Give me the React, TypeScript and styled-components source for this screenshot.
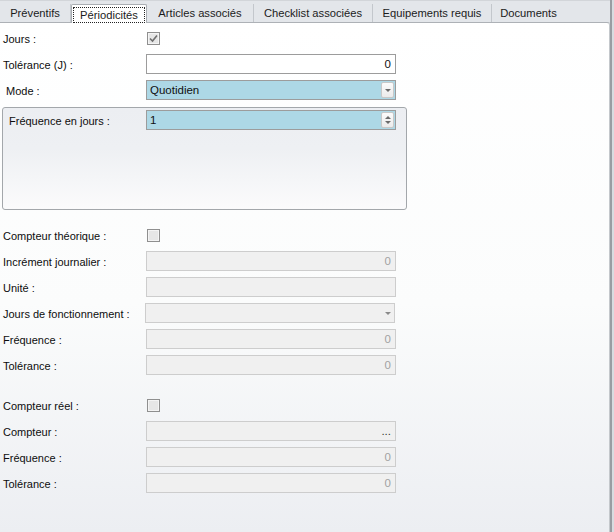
import React from "react"
import styled, { createGlobalStyle } from "styled-components"

const GlobalStyle = createGlobalStyle`
  html, body {
    margin: 0;
    padding: 0;
    height: 100%;
    background: #d9dce0;
  }
  #root {
    height: 100%;
  }
  body {
    font-family: "Liberation Sans", Arial, sans-serif;
    font-size: 11px;
    color: #000;
  }
`

const SWindow = styled.div`
  width: 610px;
  height: 532px;
  display: flex;
  flex-direction: column;
  border-right: 2px solid #9a9da2;
`

const STabStrip = styled.div`
  height: 22px;
  flex-shrink: 0;
  display: flex;
  align-items: flex-end;
  background: #e3e6ea;
  border-top: 1px solid #d2d5d9;
  box-sizing: border-box;
`

const STab = styled.div<{ $width: number; $selected?: boolean; $last?: boolean }>`
  width: ${({ $width }) => $width}px;
  height: ${({ $selected }) => ($selected ? 19 : 18)}px;
  box-sizing: border-box;
  display: flex;
  align-items: center;
  justify-content: center;
  font-size: 11.2px;
  color: #1b1b1b;
  white-space: nowrap;

  ${({ $selected }) =>
    $selected
      ? `
    background: #fff;
    border: 1px solid #a9adb2;
    border-bottom: none;
    border-radius: 2px 2px 0 0;
    margin-bottom: -1px;
    position: relative;
    z-index: 1;
    padding-top: 1px;
  `
      : ``}
  ${({ $selected, $last }) => (!$selected && !$last ? `border-right: 1px solid #c3c7cc;` : ``)}
`

const STabFocus = styled.span`
  border: 1px dotted #222;
  height: 14px;
  padding: 0 6px;
  display: flex;
  align-items: center;
`

const SPanel = styled.div`
  flex: 1;
  border-top: 1px solid #adb1b6;
  border-right: 1px solid #c4c8cc;
  border-top-right-radius: 3px;
  background: linear-gradient(180deg, #ffffff 0%, #fbfcfc 55%, #eceef2 100%);
  padding: 2px 0 0 3px;
  display: flex;
  flex-direction: column;
`

const SRow = styled.div<{ $gapTop?: number }>`
  height: 26px;
  display: grid;
  grid-template-columns: 143px 250px;
  align-items: center;
  margin-top: ${({ $gapTop }) => $gapTop ?? 0}px;
`

const SLabel = styled.span<{ $indent?: number }>`
  padding-left: ${({ $indent }) => $indent ?? 0}px;
  padding-top: 2px;
  white-space: nowrap;
  color: #0d0d0d;
`

const SCheck = styled.span`
  width: 13px;
  height: 13px;
  box-sizing: border-box;
  margin-left: 1px;
  border: 1px solid #8f8f8f;
  box-shadow: inset 0 0 0 1px #f4f4f4;
  background: #e6e6e6;
  display: flex;
  align-items: center;
  justify-content: center;
`

const SField = styled.div<{ $tone: "white" | "blue" | "disabled"; $align?: "left" | "right"; $shift?: number }>`
  width: 250px;
  height: 20px;
  box-sizing: border-box;
  margin-left: ${({ $shift }) => $shift ?? 0}px;
  display: flex;
  align-items: center;
  justify-content: ${({ $align }) => ($align === "right" ? "flex-end" : "flex-start")};
  padding: 0 ${({ $align }) => ($align === "right" ? 4 : 3)}px 0 3px;
  border: 1px solid ${({ $tone }) => ($tone === "disabled" ? "#cdcdcd" : "#9c9c9c")};
  background: ${({ $tone }) =>
    $tone === "blue" ? "#add8e6" : $tone === "disabled" ? "#f0f0f0" : "#ffffff"};
  color: ${({ $tone }) => ($tone === "disabled" ? "#a2a2a2" : "#101010")};
  font-size: 11.5px;
`

const SFieldText = styled.span`
  flex: 1;
`

const SDropButton = styled.span`
  width: 13px;
  height: 16px;
  box-sizing: border-box;
  margin-right: -2px;
  border: 1px solid #c8c8c8;
  border-radius: 2px;
  background: linear-gradient(180deg, #fbfbfb, #ebebeb);
  display: flex;
  align-items: center;
  justify-content: center;
`

const SSpinButtons = styled.span`
  width: 13px;
  height: 16px;
  box-sizing: border-box;
  margin-right: -2px;
  border: 1px solid #c8c8c8;
  border-radius: 2px;
  background: linear-gradient(180deg, #fbfbfb, #ebebeb);
  display: flex;
  flex-direction: column;
  align-items: center;
  justify-content: space-around;
  padding: 2px 0;
`

const SArrow = styled.span<{ $up?: boolean; $color?: string }>`
  width: 0;
  height: 0;
  border-left: 3px solid transparent;
  border-right: 3px solid transparent;
  ${({ $up, $color }) =>
    $up
      ? `border-bottom: 3px solid ${$color ?? "#6a6a6a"};`
      : `border-top: 3px solid ${$color ?? "#6a6a6a"};`}
`

const SGroup = styled.div`
  width: 405px;
  height: 103px;
  box-sizing: border-box;
  margin: 4px 0 12px -1px;
  border: 1px solid #a3a7ab;
  border-radius: 3px;
  background: linear-gradient(180deg, #eceef2 0%, #eef0f3 40%, #fbfbfc 100%);
  padding: 2px 0 0 6px;
`

const SGroupRow = styled.div`
  height: 20px;
  display: grid;
  grid-template-columns: 137px 250px;
  align-items: center;
`

const CheckMark = () => (
  <svg width="9" height="9" viewBox="0 0 9 9">
    <path d="M1 4.5 L3.5 7 L8 1.5" fill="none" stroke="#6f6f6f" strokeWidth="1.6" />
  </svg>
)

const tabs = [
  { label: "Préventifs", width: 71 },
  { label: "Périodicités", width: 76, selected: true },
  { label: "Articles associés", width: 107 },
  { label: "Checklist associées", width: 119 },
  { label: "Equipements requis", width: 119 },
  { label: "Documents", width: 73, last: true },
]

const App = () => {
  return (
    <>
      <GlobalStyle />
      <SWindow>
        <STabStrip>
          {tabs.map((tab) => (
            <STab key={tab.label} $width={tab.width} $selected={tab.selected} $last={tab.last}>
              {tab.selected ? <STabFocus>{tab.label}</STabFocus> : tab.label}
            </STab>
          ))}
        </STabStrip>

        <SPanel>
          <SRow>
            <SLabel>Jours :</SLabel>
            <SCheck>
              <CheckMark />
            </SCheck>
          </SRow>
          <SRow>
            <SLabel>Tolérance (J) :</SLabel>
            <SField $tone="white" $align="right">0</SField>
          </SRow>
          <SRow>
            <SLabel $indent={3}>Mode :</SLabel>
            <SField $tone="blue">
              <SFieldText>Quotidien</SFieldText>
              <SDropButton>
                <SArrow />
              </SDropButton>
            </SField>
          </SRow>

          <SGroup>
            <SGroupRow>
              <SLabel>Fréquence en jours :</SLabel>
              <SField $tone="blue">
                <SFieldText>1</SFieldText>
                <SSpinButtons>
                  <SArrow $up />
                  <SArrow />
                </SSpinButtons>
              </SField>
            </SGroupRow>
          </SGroup>

          <SRow>
            <SLabel>Compteur théorique :</SLabel>
            <SCheck />
          </SRow>
          <SRow>
            <SLabel>Incrément journalier :</SLabel>
            <SField $tone="disabled" $align="right">0</SField>
          </SRow>
          <SRow>
            <SLabel>Unité :</SLabel>
            <SField $tone="disabled" />
          </SRow>
          <SRow>
            <SLabel>Jours de fonctionnement :</SLabel>
            <SField $tone="disabled" $shift={-1}>
              <SFieldText />
              <SArrow $color="#8a8a8a" />
            </SField>
          </SRow>
          <SRow>
            <SLabel>Fréquence :</SLabel>
            <SField $tone="disabled" $align="right">0</SField>
          </SRow>
          <SRow>
            <SLabel>Tolérance :</SLabel>
            <SField $tone="disabled" $align="right">0</SField>
          </SRow>

          <SRow $gapTop={14}>
            <SLabel>Compteur réel :</SLabel>
            <SCheck />
          </SRow>
          <SRow>
            <SLabel>Compteur :</SLabel>
            <SField $tone="disabled" $align="right" style={{ color: "#333" }}>...</SField>
          </SRow>
          <SRow>
            <SLabel>Fréquence :</SLabel>
            <SField $tone="disabled" $align="right">0</SField>
          </SRow>
          <SRow>
            <SLabel>Tolérance :</SLabel>
            <SField $tone="disabled" $align="right">0</SField>
          </SRow>
        </SPanel>
      </SWindow>
    </>
  )
}

export default App
